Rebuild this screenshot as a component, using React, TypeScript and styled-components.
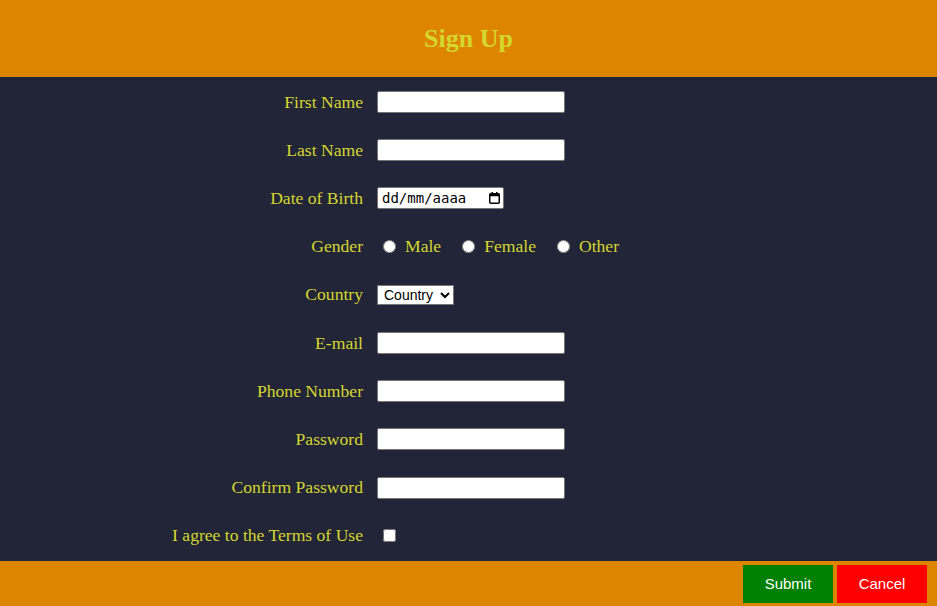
import React from "react";
import styled, { createGlobalStyle } from "styled-components";

const GlobalStyle = createGlobalStyle`
  html, body { margin: 0; padding: 0; }
  body { background: #222538; font-family: "Liberation Serif", "Times New Roman", serif; }
`;

const Page = styled.div`
  display: flex;
  flex-direction: column;
  width: 937px;
  height: 606px;
  overflow: hidden;
`;

const Header = styled.header`
  height: 77px;
  background: #dd8500;
  display: flex;
  align-items: center;
  justify-content: center;
`;

const Title = styled.h1`
  margin: 0;
  font-size: 26px;
  font-weight: bold;
  color: #d4d72e;
  font-family: "Liberation Serif", "Times New Roman", serif;
`;

const Main = styled.main`
  height: 484px;
  box-sizing: border-box;
  padding-top: 1px;
  background: #222538;
`;

const FormGrid = styled.form`
  display: grid;
  grid-template-columns: 363px auto;
  grid-auto-rows: 48.2px;
  column-gap: 14px;
  align-items: center;
  margin: 0;
`;

const Label = styled.label`
  text-align: right;
  font-size: 17.6px;
  color: #d4d72e;
`;

const Field = styled.div`
  display: flex;
  align-items: center;
`;

const TextInput = styled.input`
  box-sizing: border-box;
  width: 188px;
  height: 22px;
  margin: 0;
  padding: 1px 2px;
  border: 1px solid #767676;
  border-radius: 2px;
  background: #fff;
  font-family: "Liberation Sans", Arial, sans-serif;
  font-size: 13.33px;
`;

const DateBox = styled.div`
  box-sizing: border-box;
  width: 127px;
  height: 22px;
  border: 1px solid #767676;
  border-radius: 2px;
  background: #fff;
  display: flex;
  align-items: center;
  justify-content: space-between;
  padding: 0 3px 0 4px;
`;

const DateText = styled.input`
  border: none;
  outline: none;
  padding: 0;
  margin: 0;
  width: 95px;
  font-family: "DejaVu Sans Mono", "Liberation Mono", monospace;
  font-size: 14px;
  color: #000;
  background: transparent;
  &::placeholder { color: #000; opacity: 1; }
`;

const Radio = styled.input<{ $first?: boolean }>`
  width: 13px;
  height: 13px;
  margin: 0 9px 0 ${(p) => (p.$first ? "6px" : "21px")};
`;

const OptionText = styled.span`
  font-size: 17.6px;
  color: #d4d72e;
`;

const Select = styled.select`
  box-sizing: border-box;
  margin: 0;
  width: 77px;
  height: 20px;
  font-family: "Liberation Sans", Arial, sans-serif;
  font-size: 14px;
  background: #fff;
  color: #000;
  border: 1px solid #767676;
  border-radius: 0;
  padding: 0 0 0 2px;
`;

const Check = styled.input`
  width: 13px;
  height: 13px;
  margin: 0 0 0 6px;
`;

const Footer = styled.footer`
  height: 45px;
  background: #dd8500;
  display: flex;
  justify-content: flex-end;
  align-items: flex-start;
  gap: 4px;
  padding: 4px 10px 0 0;
  box-sizing: border-box;
`;

const Button = styled.button<{ $bg: string }>`
  width: 90px;
  height: 38px;
  border: none;
  padding: 0 0 2px;
  background: ${(p) => p.$bg};
  color: #fff;
  font-family: "Liberation Sans", Arial, sans-serif;
  font-size: 15px;
  cursor: pointer;
`;

const CalendarIcon = () => (
  <svg width="11" height="12" viewBox="0 0 11 12" aria-hidden="true">
    <rect x="0.75" y="1.75" width="9.5" height="9.5" rx="1" fill="none" stroke="#000" strokeWidth="1.5" />
    <rect x="0.75" y="1.75" width="9.5" height="2.5" fill="#000" />
    <rect x="2.5" y="0" width="1.5" height="2" fill="#000" />
    <rect x="7" y="0" width="1.5" height="2" fill="#000" />
  </svg>
);

export default function App() {
  return (
    <>
      <GlobalStyle />
      <Page>
        <Header>
          <Title>Sign Up</Title>
        </Header>
        <Main>
          <FormGrid onSubmit={(e) => e.preventDefault()}>
            <Label htmlFor="fn">First Name</Label>
            <Field><TextInput id="fn" type="text" /></Field>

            <Label htmlFor="ln">Last Name</Label>
            <Field><TextInput id="ln" type="text" /></Field>

            <Label htmlFor="dob">Date of Birth</Label>
            <Field>
              <DateBox>
                <DateText id="dob" type="text" placeholder="dd/mm/aaaa" />
                <CalendarIcon />
              </DateBox>
            </Field>

            <Label>Gender</Label>
            <Field>
              <Radio $first type="radio" name="g" id="m" />
              <OptionText>Male</OptionText>
              <Radio type="radio" name="g" id="f" />
              <OptionText>Female</OptionText>
              <Radio type="radio" name="g" id="o" />
              <OptionText>Other</OptionText>
            </Field>

            <Label htmlFor="ct">Country</Label>
            <Field>
              <Select id="ct" defaultValue="">
                <option value="">Country</option>
              </Select>
            </Field>

            <Label htmlFor="em">E-mail</Label>
            <Field><TextInput id="em" type="email" /></Field>

            <Label htmlFor="ph">Phone Number</Label>
            <Field><TextInput id="ph" type="tel" /></Field>

            <Label htmlFor="pw">Password</Label>
            <Field><TextInput id="pw" type="password" /></Field>

            <Label htmlFor="cpw">Confirm Password</Label>
            <Field><TextInput id="cpw" type="password" /></Field>

            <Label htmlFor="tos">I agree to the Terms of Use</Label>
            <Field><Check id="tos" type="checkbox" /></Field>
          </FormGrid>
        </Main>
        <Footer>
          <Button $bg="#008000">Submit</Button>
          <Button $bg="#ff0000">Cancel</Button>
        </Footer>
      </Page>
    </>
  );
}
